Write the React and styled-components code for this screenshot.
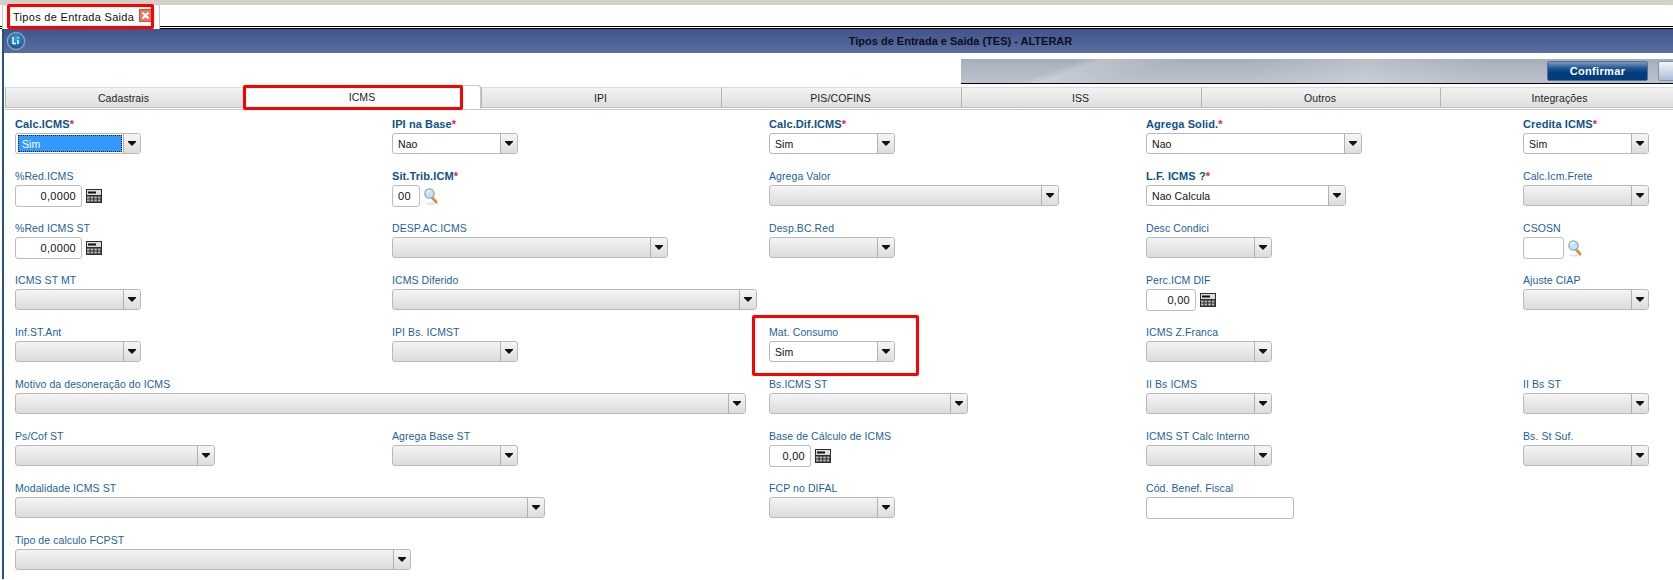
import React from 'react';
import styled, { createGlobalStyle } from 'styled-components';

const GlobalStyle = createGlobalStyle`
  html, body { margin: 0; padding: 0; background: #fff; overflow: hidden; }
  body { font-family: "Liberation Sans", Arial, sans-serif; font-size: 11px; }
`;

const Page = styled.div`
  width: 1920px;
  height: 580px;
  overflow: hidden;
  background: #fff;
`;

const TopEdge = styled.div`
  height: 5px;
  background: #d4d0c8;
`;

const TabStrip = styled.div`
  height: 21px;
  padding-left: 2px;
  display: flex;
  align-items: flex-end;
  border-bottom: 3px double #000;
  box-sizing: content-box;
`;

const DocTab = styled.div`
  position: relative;
  box-sizing: border-box;
  width: 158px;
  height: 25px;
  margin-bottom: -3px;
  padding: 4px 0 0 10px;
  background: #fff;
  border: 1px solid #c8c8c8;
  border-bottom: none;
  border-radius: 3px 3px 0 0;
  font-size: 11px;
  line-height: 17px;
  letter-spacing: 0.3px;
  color: #111;
  z-index: 1;
`;

const CloseButton = styled.span`
  position: absolute;
  left: 136px;
  top: 4px;
  width: 13px;
  height: 13px;
  display: flex;
  background: #e8775a;
  border: 1px solid #c9573f;
  box-sizing: border-box;
`;

const RedBox = styled.div`
  position: absolute;
  box-sizing: border-box;
  border: 3px solid #f00;
  border-radius: 2px;
  pointer-events: none;
  z-index: 3;
  left: ${p => p.$left}px;
  top: ${p => p.$top}px;
  width: ${p => p.$width}px;
  height: ${p => p.$height}px;
`;

const Window = styled.div`
  margin-left: 2px;
  height: 550px;
  border-left: 2px solid #26528a;
`;

const TitleBar = styled.div`
  position: relative;
  height: 24px;
  padding-right: 3px;
  background: linear-gradient(#405489, #5b6da1);
  display: flex;
  align-items: center;
  justify-content: center;
  font-weight: bold;
  font-size: 11px;
  color: #0d0d1c;
`;

const GlobeSlot = styled.div`
  position: absolute;
  left: 2px;
  top: 2px;
  width: 20px;
  height: 20px;
`;

const Toolbar = styled.div`
  margin: 6px 0 0 957px;
  height: 25px;
  box-sizing: border-box;
  padding: 2px 0 0 586px;
  display: flex;
  gap: 10px;
  border-bottom: 1px solid #000;
  background:
    linear-gradient(160deg, transparent 12%, rgba(255,255,255,.22) 14%, transparent 22%),
    linear-gradient(100deg, transparent 30%, rgba(255,255,255,.2) 42%, transparent 55%),
    linear-gradient(#a6aebb, #bcc3cd);
`;

const PrimaryButton = styled.div`
  width: 101px;
  height: 20px;
  box-sizing: border-box;
  border: 1px solid #5c6f88;
  border-radius: 2px;
  background: linear-gradient(#7d9bc2 0, #1f5591 35%, #023d80 60%, #013c7e 100%);
  color: #fff;
  font-weight: bold;
  font-size: 11px;
  letter-spacing: 0.35px;
  line-height: 18px;
  text-align: center;
`;

const SecondaryButton = styled.div`
  width: 101px;
  height: 20px;
  box-sizing: border-box;
  border: 1px solid #7f93ad;
  border-radius: 2px;
  background: linear-gradient(#f4f6fa, #a9bdd6);
`;

const TabBar = styled.div`
  position: relative;
  display: flex;
  height: 25px;
  padding: 0 0 0 1px;
  align-items: flex-end;
`;

const Tab = styled.div`
  box-sizing: border-box;
  width: ${p => p.$width}px;
  height: ${p => (p.$active ? 24 : 21)}px;
  margin-bottom: ${p => (p.$active ? 0 : 1)}px;
  padding-top: ${p => (p.$active ? 2 : 1)}px;
  padding-right: ${p => (p.$active ? 0 : 2)}px;
  text-align: center;
  font-size: 10.5px;
  letter-spacing: 0.1px;
  line-height: 18px;
  color: #1d1d1d;
  background: ${p => (p.$active ? '#fff' : 'linear-gradient(#f3f3f3, #dedede)')};
  border: 1px solid #c4c8cc;
  border-top-color: ${p => (p.$active ? '#c4c8cc' : '#d3ddea')};
  border-left-color: ${p => (p.$active ? '#c4c8cc' : '#b4b4b4')};
  border-bottom: ${p => (p.$active ? 'none' : '1px solid #c0c0c0')};
  border-radius: ${p => (p.$active ? '3px 3px 0 0' : '0')};
  border-right: ${p => (p.$active ? '1px solid #c4c8cc' : 'none')};
`;

const FormGrid = styled.div`
  display: grid;
  grid-template-columns: repeat(4, 377px) 126px;
  grid-auto-rows: 52px;
  padding: 7px 0 0 10px;
  border-top: 1px solid #c8c8c8;
  margin-left: 1px;
`;

const Field = styled.div`
  position: relative;
  grid-column: ${p => (p.$col ? `${p.$col} / span ${p.$span || 1}` : `span ${p.$span || 1}`)};
`;

const Label = styled.div`
  height: 16px;
  line-height: 14px;
  font-size: 10.5px;
  letter-spacing: 0.08px;
  white-space: nowrap;
  color: #1c5f9c;
  ${p => p.$required && 'font-size: 11px; font-weight: bold; color: #0f5289; letter-spacing: 0.1px;'}
`;

const Star = styled.span`
  color: #f01a3c;
`;

const SelectBox = styled.div`
  box-sizing: border-box;
  width: ${p => p.$width}px;
  height: 21px;
  display: flex;
  border: 1px solid #b9b9b9;
  border-radius: 3px;
  background: ${p => (p.$filled ? '#fff' : 'linear-gradient(#f4f4f4, #dcdcdc)')};
`;

const SelectValue = styled.div`
  flex: 1;
  min-width: 0;
  margin: 1px 1px 1px ${p => (p.$focused ? 2 : 3)}px;
  padding-left: ${p => (p.$focused ? 4 : 2)}px;
  font-size: 10.5px;
  letter-spacing: 0.1px;
  line-height: 18px;
  color: ${p => (p.$focused ? '#fff' : '#111')};
  background: ${p => (p.$focused ? '#3399ff' : 'transparent')};
  outline: ${p => (p.$focused ? '1px dotted #222' : 'none')};
  outline-offset: -1px;
`;

const SelectArrow = styled.div`
  width: 16px;
  display: flex;
  align-items: center;
  justify-content: center;
  border-left: 1px solid #b0b0b0;
  background: linear-gradient(#f6f6f6, #dcdcdc);
  border-radius: 0 2px 2px 0;
`;

const InputRow = styled.div`
  display: flex;
  align-items: center;
  gap: 4px;
`;

const TextBox = styled.div`
  box-sizing: border-box;
  width: ${p => p.$width}px;
  height: 22px;
  padding: 0 5px;
  border: 1px solid #bdbdbd;
  border-radius: 3px;
  background: #fff;
  font-size: 11px;
  letter-spacing: 0.3px;
  line-height: 20px;
  color: #111;
  text-align: ${p => p.$align || 'left'};
`;

const Arrow = () => (
  <svg width="8" height="5" viewBox="0 0 8 5">
    <path d="M0 0h8v1L4 5 0 1z" fill="#111" />
  </svg>
);

const CalcIcon = () => (
  <svg width="16" height="14" viewBox="0 0 16 14">
    <rect x="0" y="0" width="16" height="14" fill="#2e2e2e" />
    <rect x="1" y="1" width="14" height="5" fill="#dcdcdc" />
    <rect x="2" y="2.5" width="8" height="2" fill="#111" />
    {[0, 1].map(r =>
      [0, 1, 2, 3].map(c => (
        <rect key={`${r}${c}`} x={1 + c * 3.6} y={7.5 + r * 3} width="2.6" height="2" fill="#b8b8b8" />
      ))
    )}
  </svg>
);

const LookupIcon = () => (
  <svg width="14" height="17" viewBox="0 0 14 17">
    <ellipse cx="7" cy="15.5" rx="6" ry="1.2" fill="#e4e4e4" />
    <path d="M8 9.5l4.2 4.5" stroke="#e58a2c" strokeWidth="2.6" strokeLinecap="round" />
    <circle cx="5.5" cy="5.5" r="4.6" fill="#bfe6f7" stroke="#9aa6ad" strokeWidth="1.4" />
    <path d="M3 5a3 3 0 0 1 3-2.4" stroke="#fff" strokeWidth="1.2" fill="none" />
  </svg>
);

const Globe = () => (
  <svg width="20" height="20" viewBox="0 0 20 20">
    <defs>
      <radialGradient id="globe" cx="50%" cy="35%" r="65%">
        <stop offset="0" stopColor="#3f9fd8" />
        <stop offset="1" stopColor="#0b4f8c" />
      </radialGradient>
    </defs>
    <circle cx="10" cy="10" r="8.6" fill="url(#globe)" stroke="#8f9fb2" strokeWidth="1.5" />
    <path d="M7 6v6.5h3M12 6v1.5M12 9v4" stroke="#fff" strokeWidth="1.4" fill="none" />
  </svg>
);

const CloseX = () => (
  <svg width="11" height="11" viewBox="0 0 11 11">
    <path d="M2.5 2.5l6 6M8.5 2.5l-6 6" stroke="#fff" strokeWidth="2.2" />
  </svg>
);

const tabs = [
  { name: 'Cadastrais', width: 238 },
  { name: 'ICMS', width: 238, active: true },
  { name: 'IPI', width: 240 },
  { name: 'PIS/COFINS', width: 240 },
  { name: 'ISS', width: 240 },
  { name: 'Outros', width: 239 },
  { name: 'Integrações', width: 240 },
  { name: '', width: 240 },
];

const fields = [
  { label: 'Calc.ICMS', req: true, w: 126, value: 'Sim', focused: true },
  { label: 'IPI na Base', req: true, w: 126, value: 'Nao' },
  { label: 'Calc.Dif.ICMS', req: true, w: 126, value: 'Sim' },
  { label: 'Agrega Solid.', req: true, w: 216, value: 'Nao' },
  { label: 'Credita ICMS', req: true, w: 126, value: 'Sim' },

  { label: '%Red.ICMS', kind: 'calc', w: 67, value: '0,0000' },
  { label: 'Sit.Trib.ICM', req: true, kind: 'lookup', w: 28, value: '00' },
  { label: 'Agrega Valor', w: 290 },
  { label: 'L.F. ICMS ?', req: true, w: 200, value: 'Nao Calcula' },
  { label: 'Calc.Icm.Frete', w: 126 },

  { label: '%Red ICMS ST', kind: 'calc', w: 67, value: '0,0000' },
  { label: 'DESP.AC.ICMS', w: 276 },
  { label: 'Desp.BC.Red', w: 126 },
  { label: 'Desc Condici', w: 126 },
  { label: 'CSOSN', kind: 'lookup', w: 41, value: '' },

  { label: 'ICMS ST MT', w: 126 },
  { label: 'ICMS Diferido', w: 365 },
  { label: 'Perc.ICM DIF', kind: 'calc', w: 50, value: '0,00', col: 4 },
  { label: 'Ajuste CIAP', w: 126 },

  { label: 'Inf.ST.Ant', w: 126 },
  { label: 'IPI Bs. ICMST', w: 126 },
  { label: 'Mat. Consumo', w: 126, value: 'Sim', marked: true },
  { label: 'ICMS Z.Franca', w: 126 },

  { label: 'Motivo da desoneração do ICMS', w: 731, col: 1, span: 2 },
  { label: 'Bs.ICMS ST', w: 199 },
  { label: 'II Bs ICMS', w: 126 },
  { label: 'II Bs ST', w: 126 },

  { label: 'Ps/Cof ST', w: 200 },
  { label: 'Agrega Base ST', w: 126 },
  { label: 'Base de Cálculo de ICMS', kind: 'calc', w: 42, value: '0,00' },
  { label: 'ICMS ST Calc Interno', w: 126 },
  { label: 'Bs. St Suf.', w: 126 },

  { label: 'Modalidade ICMS ST', w: 530, col: 1, span: 2 },
  { label: 'FCP no DIFAL', w: 126 },
  { label: 'Cód. Benef. Fiscal', kind: 'text', w: 148, value: '' },

  { label: 'Tipo de calculo FCPST', w: 396, col: 1, span: 2 },
];

function Control({ field }) {
  if (field.kind === 'calc') {
    return (
      <InputRow>
        <TextBox $width={field.w} $align="right">{field.value}</TextBox>
        <CalcIcon />
      </InputRow>
    );
  }
  if (field.kind === 'lookup') {
    return (
      <InputRow>
        <TextBox $width={field.w}>{field.value}</TextBox>
        <LookupIcon />
      </InputRow>
    );
  }
  if (field.kind === 'text') {
    return <TextBox $width={field.w}>{field.value}</TextBox>;
  }
  return (
    <SelectBox $width={field.w} $filled={!!field.value}>
      <SelectValue $focused={field.focused}>{field.value}</SelectValue>
      <SelectArrow><Arrow /></SelectArrow>
    </SelectBox>
  );
}

export default function App() {
  return (
    <Page>
      <GlobalStyle />
      <TopEdge />
      <TabStrip>
        <DocTab>
          Tipos de Entrada Saida
          <CloseButton><CloseX /></CloseButton>
          <RedBox $left={4} $top={-1} $width={147} $height={25} />
        </DocTab>
      </TabStrip>
      <Window>
        <TitleBar>
          <GlobeSlot><Globe /></GlobeSlot>
          Tipos de Entrada e Saida (TES) - ALTERAR
        </TitleBar>
        <Toolbar>
          <PrimaryButton>Confirmar</PrimaryButton>
          <SecondaryButton />
        </Toolbar>
        <TabBar>
          {tabs.map(t => (
            <Tab key={t.name} $width={t.width} $active={t.active}>{t.name}</Tab>
          ))}
          <RedBox $left={239} $top={1} $width={220} $height={25} />
        </TabBar>
        <FormGrid>
          {fields.map(f => (
            <Field key={f.label} $col={f.col} $span={f.span}>
              <Label $required={f.req}>{f.label}{f.req && <Star>*</Star>}</Label>
              <Control field={f} />
              {f.marked && <RedBox $left={-17} $top={-10} $width={167} $height={61} />}
            </Field>
          ))}
        </FormGrid>
      </Window>
    </Page>
  );
}
